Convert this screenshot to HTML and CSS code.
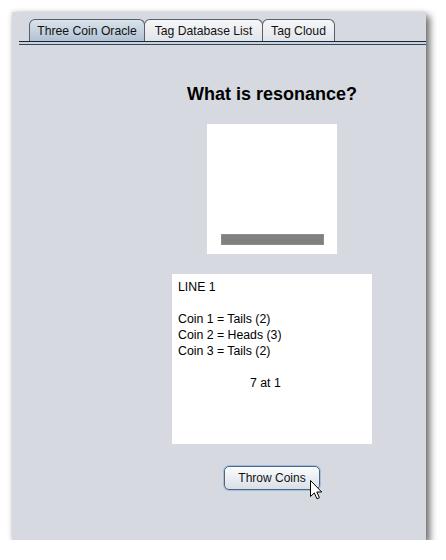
FILE: index.html
```html
<!DOCTYPE html>
<html>
<head>
<meta charset="utf-8">
<link rel="stylesheet" href="styles.css">
</head>
<body>
<div class="window">
  <div class="tabs-area">
    <div class="tabbar">
      <div class="tab selected tab-oracle">Three Coin Oracle</div>
      <div class="tab tab-list">Tag Database List</div>
      <div class="tab tab-cloud">Tag Cloud</div>
    </div>
    <div class="tabline"></div>
  </div>
  <div class="content">
    <h1 class="question">What is resonance?</h1>
    <div class="coin-canvas">
      <div class="coin-bar"></div>
    </div>
    <div class="result-box">
      <div class="line">LINE 1</div>
      <div class="line">&nbsp;</div>
      <div class="line">Coin 1 = Tails (2)</div>
      <div class="line">Coin 2 = Heads (3)</div>
      <div class="line">Coin 3 = Tails (2)</div>
      <div class="line">&nbsp;</div>
      <div class="line total">7 at 1</div>
    </div>
    <div class="button-wrap">
      <button class="throw-btn">Throw Coins</button>
      <svg class="cursor" width="13" height="20" viewBox="0 0 13 20">
        <path d="M0.5 0.5 L0.5 16.5 L4.3 12.9 L7 18.8 L9.4 17.7 L6.8 12 L11.7 12 Z" fill="#fff" stroke="#000" stroke-width="1" stroke-linejoin="miter"/>
      </svg>
    </div>
  </div>
</div>
</body>
</html>
```

FILE: styles.css
```css
* { box-sizing: border-box; }

body {
  margin: 0;
  background: #ffffff;
  font-family: "Liberation Sans", Arial, sans-serif;
}

.window {
  margin: 12px 0 0 12px;
  width: 414px;
  height: 528px;
  background: #d6d9df;
  box-shadow: 4px 4px 7px rgba(0, 0, 0, 0.55), 0 0 5px rgba(0, 0, 0, 0.15);
}

.tabs-area {
  padding: 7px 0 0 7px;
}

.tabbar {
  display: flex;
  padding-left: 10px;
  height: 22px;
}

.tab {
  height: 22px;
  margin-right: -1px;
  border: 1px solid #56606c;
  border-bottom: none;
  border-radius: 6px 6px 0 0;
  background: linear-gradient(#f6f7f9, #e1e4e9);
  font-size: 12.2px;
  line-height: 22px;
  text-align: center;
  color: #111;
  white-space: nowrap;
}

.tab-oracle { width: 116px; }
.tab-list { width: 119px; }
.tab-cloud { width: 73px; }

.tab.selected {
  background: linear-gradient(#dae3ec, #b1c2d3);
}

.tabline {
  height: 4px;
  border-top: 1px solid #1c2533;
  border-bottom: 1px solid #3a4656;
  background: #c5d3e2;
}

.content {
  display: flex;
  flex-direction: column;
  align-items: center;
  padding-left: 106px;
}

.question {
  margin: 38px 0 0 0;
  font-size: 18px;
  line-height: 22px;
  font-weight: bold;
  color: #000;
}

.coin-canvas {
  margin-top: 19px;
  width: 130px;
  height: 130px;
  background: #ffffff;
  padding: 110px 0 0 14px;
}

.coin-bar {
  width: 103px;
  height: 11px;
  background: #808080;
  border: 1px solid #8e8e8e;
}

.result-box {
  margin-top: 20px;
  width: 200px;
  height: 170px;
  background: #ffffff;
  padding: 5px 6px;
  font-size: 12.3px;
  line-height: 16px;
  color: #000;
}

.total {
  padding-left: 72px;
}

.button-wrap {
  position: relative;
  margin-top: 22px;
}

.throw-btn {
  display: block;
  width: 96px;
  height: 24px;
  padding: 0;
  border: 1px solid #4f6682;
  border-radius: 5px;
  background: linear-gradient(#fbfcfd, #e9edf2 55%, #d9dfe7);
  box-shadow: 0 0 0 1px #9fbfe0;
  font-family: "Liberation Sans", Arial, sans-serif;
  font-size: 12px;
  line-height: 22px;
  color: #111;
}

.cursor {
  position: absolute;
  left: 86px;
  top: 14px;
}
```
